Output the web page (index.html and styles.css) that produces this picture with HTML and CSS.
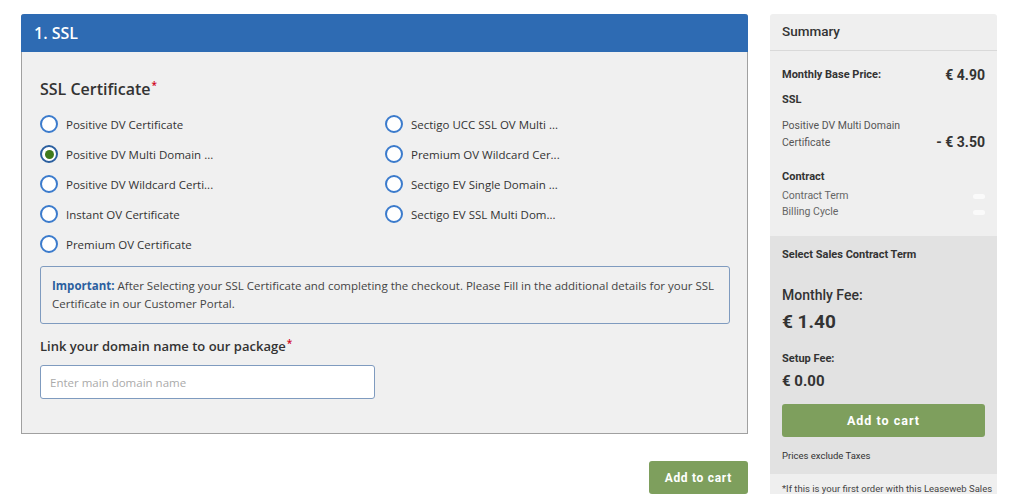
FILE: index.html
```html
<!DOCTYPE html>
<html>
    <head>
        <meta charset="UTF-8">
        <title>Order - SSL</title>
        <link rel="stylesheet" href="styles.css">
    </head>
    <body>
        <div class="page">
            <main class="order">
                <section class="card">
                    <header class="card-head">1. SSL</header>
                    <div class="card-body">
                        <h2 class="field-title">SSL Certificate<span class="req">*</span></h2>

                        <div class="options">
                            <label class="option"><span class="radio"></span>Positive DV Certificate</label>
                            <label class="option"><span class="radio checked"></span>Positive DV Multi Domain ...</label>
                            <label class="option"><span class="radio"></span>Positive DV Wildcard Certi...</label>
                            <label class="option"><span class="radio"></span>Instant OV Certificate</label>
                            <label class="option"><span class="radio"></span>Premium OV Certificate</label>
                            <label class="option"><span class="radio"></span>Sectigo UCC SSL OV Multi ...</label>
                            <label class="option"><span class="radio"></span>Premium OV Wildcard Cer...</label>
                            <label class="option"><span class="radio"></span>Sectigo EV Single Domain ...</label>
                            <label class="option"><span class="radio"></span>Sectigo EV SSL Multi Dom...</label>
                        </div>

                        <div class="notice">
                            <b>Important:</b> After Selecting your SSL Certificate and completing the checkout. Please Fill in the additional details for your SSL Certificate in our Customer Portal.
                        </div>

                        <h3 class="field-label">Link your domain name to our package<span class="req">*</span></h3>
                        <input class="text-input" type="text" placeholder="Enter main domain name">
                    </div>
                </section>
                <div class="actions">
                    <button class="btn-cart">Add to cart</button>
                </div>
            </main>

            <aside class="summary">
                <div class="summary-head">Summary</div>

                <div class="summary-block">
                    <div class="line-row first">
                        <span class="strong">Monthly Base Price:</span>
                        <span class="price">&euro; 4.90</span>
                    </div>
                    <div class="group-title">SSL</div>
                    <div class="line-row item">
                        <span class="item-name">Positive DV Multi Domain<br>Certificate</span>
                        <span class="price">- &euro; 3.50</span>
                    </div>
                    <div class="group-title contract">Contract</div>
                    <div class="line-row small"><span>Contract Term</span><span class="pill"></span></div>
                    <div class="line-row small"><span>Billing Cycle</span><span class="pill"></span></div>
                </div>

                <div class="summary-fees">
                    <div class="strong">Select Sales Contract Term</div>
                    <div class="fee-label">Monthly Fee:</div>
                    <div class="fee-big">&euro; 1.40</div>
                    <div class="strong setup">Setup Fee:</div>
                    <div class="fee-mid">&euro; 0.00</div>
                    <button class="btn-cart wide">Add to cart</button>
                    <div class="taxes">Prices exclude Taxes</div>
                </div>

                <div class="summary-note">*If this is your first order with this Leaseweb Sales</div>
            </aside>
        </div>
    </body>
</html>
```

FILE: styles.css
```css
body {
    margin: 0;
    background-color: white;
    font-family: "Open Sans", "Noto Sans", sans-serif;
    color: #333;
}

.page {
    display: flex;
    align-items: flex-start;
    gap: 22px;
    padding: 14px 27px 0 21px;
}

/* main column */

.order {
    width: 727px;
    flex: none;
}

.card {
    background-color: #f0f0f0;
    border: 1px solid #a0a0a0;
    border-top: none;
    border-radius: 3px 3px 0 0;
}

.card-head {
    height: 38px;
    line-height: 38px;
    margin: 0 -1px;
    padding-left: 13px;
    background-color: #2e6bb3;
    color: white;
    font-size: 16px;
    font-weight: 600;
    border-radius: 3px 3px 0 0;
}

.card-body {
    padding: 27px 17px 34px 18px;
}

.field-title {
    margin: 0 0 10px 0;
    font-size: 16px;
    line-height: 20px;
    font-weight: 600;
    color: #333;
}

.req {
    color: #d0021b;
    font-size: 10px;
    vertical-align: top;
    line-height: 12px;
    margin-left: 1px;
}

.options {
    display: grid;
    grid-template-columns: 345px 345px;
    grid-template-rows: repeat(5, 30px);
    grid-auto-flow: column;
}

.option {
    display: flex;
    align-items: center;
    font-size: 11.5px;
    color: #333;
}

.radio {
    box-sizing: border-box;
    width: 18px;
    height: 18px;
    margin-right: 8px;
    border: 2px solid #3b7bcc;
    border-radius: 50%;
    background-color: white;
    display: flex;
    align-items: center;
    justify-content: center;
}

.radio.checked {
    border-color: #2b5f9f;
}

.radio.checked::after {
    content: "";
    width: 9px;
    height: 9px;
    border-radius: 50%;
    background-color: #3f7a1c;
}

.notice {
    margin-top: 7px;
    padding: 10px 11px;
    border: 1px solid #7f9bbf;
    border-radius: 3px;
    font-size: 11.5px;
    line-height: 18px;
    color: #444;
}

.notice b {
    color: #2b5f9f;
}

.field-label {
    margin: 13px 0 10px 0;
    font-size: 13px;
    line-height: 18px;
    font-weight: 600;
    color: #333;
}

.text-input {
    box-sizing: border-box;
    display: block;
    width: 335px;
    height: 34px;
    padding: 0 9px;
    border: 1px solid #7f9bbf;
    border-radius: 3px;
    background-color: white;
    font-family: inherit;
    font-size: 11.5px;
}

.text-input::placeholder {
    color: #aaa;
}

.actions {
    display: flex;
    justify-content: flex-end;
    margin-top: 27px;
}

.btn-cart {
    height: 33px;
    padding: 0 16px;
    border: none;
    border-radius: 3px;
    background-color: #7e9f5d;
    color: white;
    font-family: "Roboto", sans-serif;
    font-size: 12px;
    font-weight: 700;
    letter-spacing: 0.7px;
}

/* summary column */

.summary {
    width: 227px;
    flex: none;
    background-color: #efefef;
    border-radius: 3px 3px 0 0;
    font-family: "Roboto", sans-serif;
    color: #333;
    overflow: hidden;
}

.summary-head {
    height: 36px;
    line-height: 35px;
    padding-left: 12px;
    border-bottom: 1px solid #d9d9d9;
    font-size: 13.5px;
    font-weight: 500;
}

.summary-block {
    padding: 14px 12px 16px 12px;
}

.line-row {
    display: flex;
    justify-content: space-between;
    align-items: center;
    line-height: 20px;
}

.strong {
    font-size: 11px;
    font-weight: 700;
}

.price {
    font-size: 14px;
    font-weight: 700;
}

.group-title {
    margin-top: 5px;
    font-size: 11px;
    font-weight: 700;
    line-height: 20px;
}

.line-row.item {
    margin-top: 7px;
    align-items: flex-end;
    line-height: 17px;
}

.item-name {
    font-size: 10.5px;
    color: #555;
}

.group-title.contract {
    margin-top: 18px;
    margin-bottom: 3px;
    line-height: 16px;
}

.line-row.small {
    line-height: 16px;
    font-size: 10.5px;
    color: #666;
}

.pill {
    width: 12px;
    height: 5px;
    border-radius: 3px;
    background-color: #fafafa;
}

.summary-fees {
    background-color: #e2e2e2;
    padding: 11px 12px 11px 12px;
}

.summary-fees .strong {
    line-height: 16px;
}

.fee-label {
    margin-top: 22px;
    font-size: 14px;
    font-weight: 500;
    line-height: 20px;
}

.fee-big {
    margin-top: 4px;
    font-size: 19px;
    font-weight: 700;
    line-height: 26px;
}

.summary-fees .setup {
    margin-top: 16px;
}

.fee-mid {
    margin-top: 4px;
    font-size: 15px;
    font-weight: 700;
    line-height: 20px;
}

.btn-cart.wide {
    display: block;
    width: 100%;
    margin-top: 13px;
    font-size: 12.5px;
    letter-spacing: 1px;
}

.taxes {
    margin-top: 12px;
    font-size: 9.5px;
    line-height: 14px;
}

.summary-note {
    padding: 8px 12px;
    font-size: 9.5px;
    line-height: 14px;
    color: #444;
    white-space: nowrap;
}
```
